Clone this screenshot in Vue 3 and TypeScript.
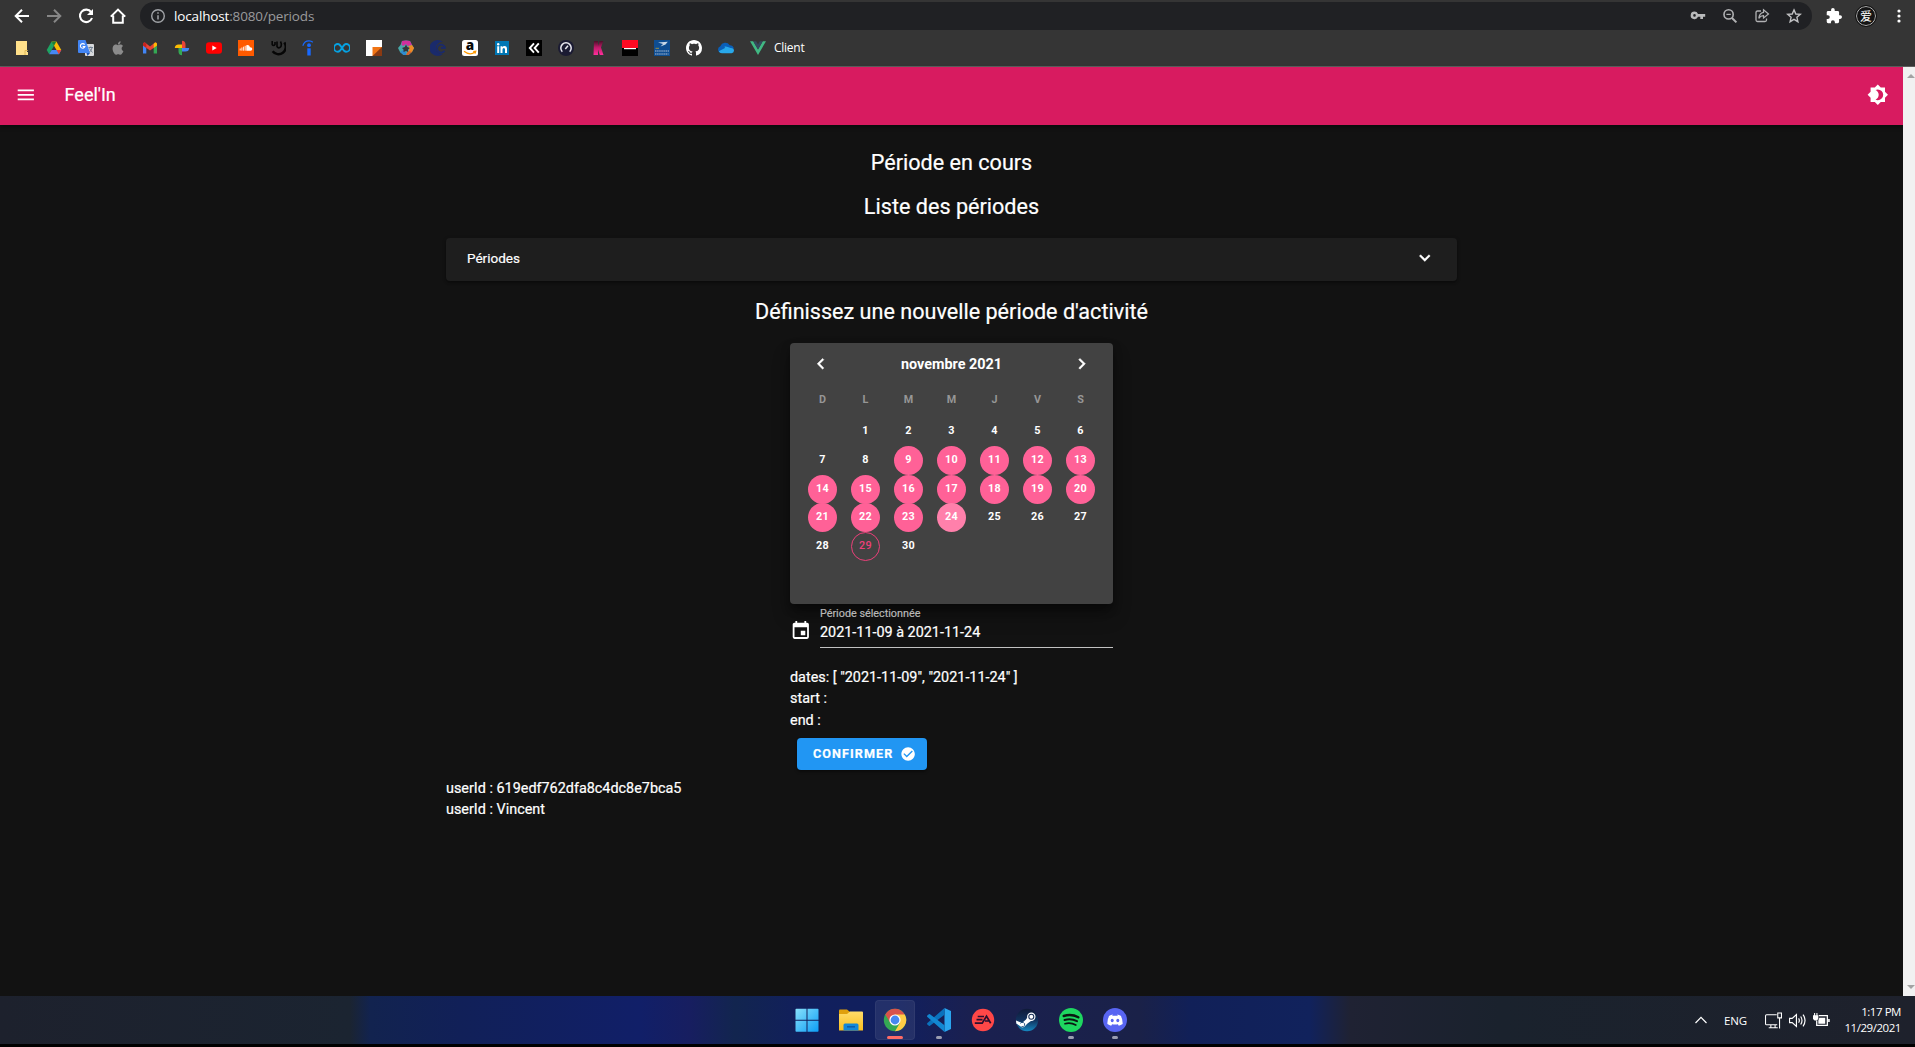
<script setup lang="ts">
interface Day { n: number | null; sel?: boolean; end?: boolean; today?: boolean }

const weekdays = ['D', 'L', 'M', 'M', 'J', 'V', 'S']
const days: Day[] = [{ n: null }]
for (let n = 1; n <= 30; n++) {
  days.push({ n, sel: n >= 9 && n <= 24, end: n === 24, today: n === 29 })
}
const dates = ['2021-11-09', '2021-11-24']
const range = dates.join(' à ')
const datesText = '[ ' + dates.map(d => `"${d}"`).join(', ') + ' ]'
</script>

<template>
  <div class="screen">
    <header class="chrome">
      <div class="toolbar">
        <nav class="nav">
          <svg class="i16" viewBox="0 0 16 16"><path d="M15 8H2M8 1.7L1.7 8L8 14.3" fill="none" stroke="#fff" stroke-width="2" /></svg>
          <svg class="i16" viewBox="0 0 16 16"><path d="M1 8H14M8 1.7L14.3 8L8 14.3" fill="none" stroke="#878787" stroke-width="2" /></svg>
          <svg class="i16" viewBox="0 0 16 16"><path d="M13.2 4.2A6.2 6.2 0 1 0 14 10" fill="none" stroke="#fff" stroke-width="2.1" /><path d="M15 1V7H9Z" fill="#fff" /></svg>
          <svg class="i16" viewBox="0 0 16 16"><path d="M.8 8.6L8 1.6L15.2 8.6M3.2 7.5V14.7H12.8V7.5" fill="none" stroke="#fff" stroke-width="2" /></svg>
        </nav>
        <div class="omnibox">
          <svg class="i16" viewBox="0 0 16 16"><circle cx="8" cy="8" r="6.3" fill="none" stroke="#a0a3a7" stroke-width="1.4" /><path d="M8 7.2V11.6M8 4.2V5.8" stroke="#a0a3a7" stroke-width="1.5" /></svg>
          <span class="url"><b>localhost</b>:8080/periods</span>
          <svg class="i16 push" viewBox="0 0 16 16"><path d="M4.5 3.6a3.8 3.8 0 1 0 3.5 5.2H10.3V11H13V8.8H15.2V6H8A3.8 3.8 0 0 0 4.5 3.6M4.5 6.1a1.3 1.3 0 1 1 0 2.6a1.3 1.3 0 0 1 0-2.6" fill="#b9babb" fill-rule="evenodd" /></svg>
          <svg class="i16" viewBox="0 0 16 16"><circle cx="6.6" cy="6.4" r="4.6" fill="none" stroke="#b0b1b3" stroke-width="1.6" /><path d="M10 10L14.4 14.4" stroke="#b0b1b3" stroke-width="2" /><path d="M4.4 6.4H8.8" stroke="#b0b1b3" stroke-width="1.2" /></svg>
          <svg class="i16" viewBox="0 0 16 16"><path d="M7 3H3.5Q2 3 2 4.500V12Q2 13.500 3.500 13.500H11Q12.500 13.500 12.500 12V10.500" fill="none" stroke="#b0b1b3" stroke-width="1.3" /><path d="M9.500 1.800L14.500 6L9.500 10V7.700Q6.500 7.700 4.800 10.400Q5.300 5 9.500 4.400Z" fill="none" stroke="#b0b1b3" stroke-width="1.200" /></svg>
          <svg class="i16" viewBox="0 0 16 16"><path d="M8 1.900L9.800 6L14.300 6.400L10.900 9.300L11.900 13.700L8 11.400L4.100 13.700L5.100 9.300L1.700 6.400L6.200 6Z" fill="none" stroke="#c0c1c3" stroke-width="1.400" /></svg>
        </div>
        <div class="actions">
          <svg class="i16" viewBox="1 1 22 22"><path fill="#fff" d="M20.500 11H19V7a2 2 0 0 0-2-2h-4V3.500a2.500 2.500 0 0 0-5 0V5H4a2 2 0 0 0-2 2v3.800h1.500a2.700 2.700 0 0 1 0 5.400H2V20a2 2 0 0 0 2 2h3.800v-1.500a2.700 2.700 0 0 1 5.400 0V22H17a2 2 0 0 0 2-2v-4h1.500a2.500 2.500 0 0 0 0-5" /></svg>
          <span class="avatar">爱</span>
          <svg class="dots" viewBox="0 0 4 16"><circle cx="2" cy="3" r="1.600" fill="#fff" /><circle cx="2" cy="8" r="1.600" fill="#fff" /><circle cx="2" cy="13" r="1.600" fill="#fff" /></svg>
        </div>
      </div>
      <div class="bookmarks">
        <svg class="i16" viewBox="0 0 16 16"><path d="M2 1H13V12L14 12V15H2Z" fill="#ffe08a" /><path d="M11 15V10.500H14" fill="none" stroke="#d8b04a" stroke-width=".8" /></svg>
        <svg class="i16" viewBox="0 0 16 16"><path d="M5.600 1.500H10.400L15.300 10H10.500Z" fill="#fbbc04" /><path d="M5.600 1.500L8 5.700L3.200 14.200L.7 10Z" fill="#1ea362" /><path d="M5.600 10H15.300L12.900 14.200H3.200Z" fill="#4688f4" /><path d="M10.400 1.500H5.600L8 5.700Z" fill="#188038" /><path d="M10.500 10H15.300L12.900 14.200Z" fill="#ea4335" /></svg>
        <svg class="i16" viewBox="0 0 16 16"><rect x="7" y="4" width="9" height="12" rx="1" fill="#d8dadd" /><path d="M0 1Q0 0 1 0H7.500L12 13H1Q0 13 0 12Z" fill="#4285f4" /><path d="M8.500 13L12 13L9.500 16Z" fill="#1a50b0" /><path d="M6.600 4.600A2.300 2.300 0 1 0 6.900 6.600H4.700" fill="none" stroke="#fff" stroke-width="1.100" /><path d="M10.500 7.500H15M12.800 6.500V7.500M14 8Q13 11 11.500 12M11.500 8.500Q13 11 14.500 12.500" fill="none" stroke="#6a7a8c" stroke-width=".9" /></svg>
        <svg class="i16" viewBox="0 0 24 24"><path fill="#8b8b8b" d="M18.700 19.500c-.8 1.200-1.700 2.500-3.100 2.500s-1.800-.8-3.300-.8c-1.500 0-2 .8-3.300.8s-2.300-1.300-3.100-2.500C4.200 17 2.900 12.500 4.700 9.400c.9-1.500 2.400-2.500 4.100-2.500 1.300 0 2.500.9 3.300.9s2.300-1.100 3.800-.9c.7 0 2.500.3 3.600 2-.1.100-2.200 1.200-2.100 3.800 0 3 2.600 4 2.700 4-.1.100-.5 1.400-1.400 2.800M13 3.500c.7-.8 1.900-1.500 2.900-1.500.2 1.200-.3 2.400-1 3.200-.7.800-1.800 1.500-2.900 1.400-.2-1.100.4-2.300 1-3.100" /></svg>
        <svg class="i16" viewBox="0 0 16 16"><path d="M1 4V13.500H4.300V6.500Z" fill="#4285f4" /><path d="M15 4V13.500H11.700V6.500Z" fill="#34a853" /><path d="M1 4.200Q1 2.200 3 2.600L8 6.500L13 2.600Q15 2.200 15 4.200L15 5.500L8 10.600L1 5.500Z" fill="#ea4335" /><path d="M11.700 4L13 2.600Q15 2.200 15 4.200V5.500L11.700 8Z" fill="#fbbc04" /><path d="M1 4.200Q1 2.200 3 2.600L4.300 4V8L1 5.500Z" fill="#c5221f" /></svg>
        <svg class="i16" viewBox="0 0 16 16"><path d="M8 8V.8A3.700 3.700 0 0 1 11.500 4.500V8Z" fill="#ea4335" /><path d="M8 8H15.200A3.700 3.700 0 0 1 11.500 11.500H8Z" fill="#4285f4" /><path d="M8 8V15.200A3.700 3.700 0 0 1 4.500 11.500V8Z" fill="#34a853" /><path d="M8 8H.8A3.700 3.700 0 0 1 4.500 4.500H8Z" fill="#fbbc04" /></svg>
        <svg class="i16" viewBox="0 0 16 16"><rect x="0" y="2.300" width="16" height="11.400" rx="3" fill="#f00" /><path d="M6.300 5.500V10.500L10.700 8Z" fill="#fff" /></svg>
        <svg class="i16" viewBox="0 0 16 16"><rect width="16" height="16" fill="#ff5a00" /><path d="M2.200 8.500V10.500M3.900 7.500V10.700M5.600 6.700V10.700M7.200 5.800V10.700" stroke="#fff" stroke-width=".9" /><path d="M8.300 5.300Q11.300 4.500 12 7.300Q14.300 7.200 14.300 9Q14.200 10.700 12.600 10.700H8.300Z" fill="#fff" /></svg>
        <svg class="i16" viewBox="0 0 16 16"><path d="M14.300 2.500A6.800 6.800 0 0 1 2.600 11.300" fill="none" stroke="#060606" stroke-width="2.400" /><path d="M2.200 1V4.500Q3.500 6.500 5 4.500V2M7 1.500V6.500Q8.500 9.300 11 6.500Q12 4 10.500 1.500" fill="none" stroke="#060606" stroke-width="1.600" /></svg>
        <svg class="i16" viewBox="0 0 16 16"><path d="M.8 5.800Q2.500 .8 7 .9Q9.500 1 10.800 2.200" fill="none" stroke="#1769ff" stroke-width="1.200" /><circle cx="7" cy="5.200" r="1.900" fill="#1769ff" /><path d="M5.300 8.300H8.700V15.500H5.300Z" fill="#1769ff" /></svg>
        <svg class="i16" viewBox="0 0 16 16"><path d="M8 8C6.500 5.500 5.500 4 3.900 4a3.900 3.900 0 0 0 0 7.800C5.500 11.800 6.500 10.500 8 8S10.500 4 12.100 4a3.900 3.900 0 0 1 0 7.800C10.500 11.800 9.500 10.500 8 8" fill="none" stroke="#06a2e2" stroke-width="1.900" /></svg>
        <svg class="i16" viewBox="0 0 16 16"><rect width="16" height="16" fill="#fff" /><path d="M6.500 7H16V16H6.500Z" fill="#f07414" /><path d="M16 7V16H6.500Z" fill="#8b3a12" /></svg>
        <svg class="i16" viewBox="0 0 16 16"><path d="M4 1L8 .5L12 1L14 5L16 8L14 12L10.500 15H5.500L2 12L0 8L2.500 5Z" fill="#47a8a8" /><path d="M4 1L8 .5L12 1L14 5L9.500 6L8 4L5.500 6L3.500 5Z" fill="#d02f9c" /><path d="M14 5L16 8L14 12L11 12.500V8.500L10.500 6Z" fill="#f08a24" /><path d="M10 11L14 12L10.500 15H8Z" fill="#d9602a" /><path d="M2 12L5 10L8 12V15H5.500Z" fill="#2e8bd0" /><path d="M8 4.500L9.300 7L12 8L10 9.500V12L8 11L5.500 12V9.500L4 8L6.700 7Z" fill="#33353b" /></svg>
        <svg class="i16" viewBox="0 0 16 16"><path d="M13 2.200A8 8 0 1 0 13 13.800A5.900 5.900 0 1 1 13 2.200" fill="#1a2a6c" /><path d="M14.500 10.700A4 4 0 1 1 15 7.800H11" fill="none" stroke="#1a2a6c" stroke-width="1.800" /></svg>
        <svg class="i16 spill" viewBox="0 0 16 16"><rect width="16" height="16" rx="2.500" fill="#fff" /><text x="7.900" y="10" text-anchor="middle" font-family="Open Sans, sans-serif" font-size="13.500" font-weight="800" fill="#0a0a0a">a</text><path d="M2 11.300Q8 16 13 12.100M11.200 11.600L13.700 11.300L13 13.600" fill="none" stroke="#ff9900" stroke-width="1.300" /></svg>
        <svg class="i16" viewBox="0 0 16 16"><rect x="1" y="1" width="14" height="14" fill="#0077b5" /><path d="M3.200 6.300H5.200V13H3.200ZM6.500 6.300H8.400V7.200Q9 6.100 10.500 6.100Q13 6.100 13 9.200V13H11V9.600Q11 7.900 9.900 7.900Q8.500 7.900 8.500 9.700V13H6.500Z" fill="#fff" /><circle cx="4.200" cy="4.200" r="1.200" fill="#fff" /></svg>
        <svg class="i16" viewBox="0 0 16 16"><rect width="16" height="16" fill="#000" /><path d="M8 3.300L3.800 8L8 12.700M12.800 3.300L8.600 8L12.800 12.700" fill="none" stroke="#fff" stroke-width="1.900" /></svg>
        <svg class="i16" viewBox="0 0 16 16"><circle cx="8" cy="8" r="8" fill="#1b1b33" /><path d="M4.300 11.700A5.200 5.200 0 1 1 11.700 11.700M7.300 9L10 5.800" fill="none" stroke="#e8e8f0" stroke-width="1.500" /></svg>
        <svg class="i16" viewBox="0 0 16 16"><defs><linearGradient id="kg" x2="0" y2="1"><stop stop-color="#4a1028" /><stop offset=".45" stop-color="#c01a6a" /><stop offset="1" stop-color="#ff2f9c" /></linearGradient></defs><path d="M4 1H8V6L9.500 1H13.300L11 7.500L13.500 15H9.800L8 9.500V15H3.500Z" fill="url(#kg)" /></svg>
        <svg class="i16" viewBox="0 0 16 16"><rect width="16" height="8" fill="#ff0a22" /><rect y="8" width="16" height="8" fill="#000" /><rect x="2" y="8" width="12" height="1.200" fill="#fff" /></svg>
        <svg class="i16" viewBox="0 0 16 16"><rect width="16" height="16" fill="#0e4d92" /><path d="M4 2.500L13.800 1.800L11.500 4.500L6.500 6.500L9 4Z" fill="#c9d8e8" /><path d="M1.500 8.300H5" stroke="#b9a03a" stroke-width=".8" /><path d="M1 11H15M1 14H14.500" stroke="#5f86b4" stroke-width="1.800" stroke-dasharray="1.500 .6" /></svg>
        <svg class="i16" viewBox="0 0 16 16"><path fill="#fff" d="M8 0C3.580 0 0 3.580 0 8c0 3.540 2.290 6.530 5.470 7.590.4.070.55-.17.55-.38 0-.19-.01-.82-.01-1.490-2.010.37-2.530-.49-2.690-.94-.09-.23-.48-.94-.82-1.130-.28-.15-.68-.52-.01-.53.63-.01 1.080.58 1.230.82.72 1.210 1.870.87 2.330.66.07-.52.28-.87.51-1.070-1.780-.2-3.640-.89-3.640-3.950 0-.87.31-1.590.82-2.150-.08-.2-.36-1.020.08-2.120 0 0 .67-.21 2.200.82.64-.18 1.320-.27 2-.27s1.360.09 2 .27c1.530-1.040 2.200-.82 2.200-.82.44 1.100.16 1.920.08 2.120.51.56.82 1.270.82 2.150 0 3.070-1.870 3.750-3.650 3.950.29.25.54.73.54 1.480 0 1.070-.01 1.930-.01 2.200 0 .21.15.46.55.38A8.010 8.010 0 0 0 16 8c0-4.420-3.580-8-8-8" /></svg>
        <svg class="i16" viewBox="0 0 16 16"><path d="M3.500 12.800A3.400 3.400 0 0 1 2.300 6.200A5.300 5.300 0 0 1 11.700 5.200Q15.500 5.500 15.800 8.500L9 12.500Z" fill="#0a5fb8" /><path d="M6.500 6.500Q9 6 12.600 8Q16 8 16 10.700Q15.800 13 13.500 13.200H4Q1.500 13 .8 11.200L7 8Z" fill="#28a8ea" /></svg>
        <svg class="i16" viewBox="0 0 16 16"><path d="M0 1.200H3.200L8 9.400L12.800 1.200H16L8 15Z" fill="#41b883" /><path d="M3.200 1.200H6.100L8 4.500L9.900 1.200H12.800L8 9.400Z" fill="#35495e" /></svg>
        <span class="bm-text">Client</span>
      </div>
    </header>

    <div class="viewport">
      <div class="app">
        <div class="appbar">
          <svg class="mdi" viewBox="0 0 24 24"><path fill="#fff" d="M3,6H21V8H3V6M3,11H21V13H3V11M3,16H21V18H3V16Z" /></svg>
          <span class="brand">Feel'In</span>
          <svg class="mdi push" viewBox="0 0 24 24"><path fill="#fff" d="M12,18C11.11,18 10.26,17.8 9.5,17.45C11.56,16.5 13,14.42 13,12C13,9.58 11.56,7.5 9.5,6.55C10.26,6.2 11.11,6 12,6A6,6 0 0,1 18,12A6,6 0 0,1 12,18M20,15.31L23.31,12L20,8.69V4H15.31L12,0.69L8.69,4H4V8.69L0.69,12L4,15.31V20H8.69L12,23.31L15.31,20H20V15.31Z" /></svg>
        </div>

        <main class="container">
          <h2>Période en cours</h2>
          <h2 class="second">Liste des périodes</h2>
          <div class="panel">
            <span>Périodes</span>
            <svg class="mdi" viewBox="0 0 24 24"><path fill="#fff" stroke="#fff" stroke-width=".5" d="M7.41,8.58L12,13.17L16.59,8.58L18,10L12,16L6,10L7.41,8.58Z" /></svg>
          </div>
          <h2 class="third">Définissez une nouvelle période d'activité</h2>

          <section class="form">
            <div class="picker">
              <div class="picker-head">
                <svg class="mdi" viewBox="0 0 24 24"><path fill="#fff" stroke="#fff" stroke-width=".5" d="M15.41,16.58L10.83,12L15.41,7.41L14,6L8,12L14,18L15.41,16.58Z" /></svg>
                <span>novembre 2021</span>
                <svg class="mdi" viewBox="0 0 24 24"><path fill="#fff" stroke="#fff" stroke-width=".5" d="M8.59,16.58L13.17,12L8.59,7.41L10,6L16,12L10,18L8.59,16.58Z" /></svg>
              </div>
              <div class="grid week"><span v-for="(w, i) in weekdays" :key="i">{{ w }}</span></div>
              <div class="grid days">
                <span v-for="(d, i) in days" :key="i" class="day" :class="{ sel: d.sel, end: d.end, today: d.today }"><i>{{ d.n }}</i></span>
              </div>
            </div>
            <div class="field">
              <svg class="mdi" viewBox="0 0 24 24"><path fill="#fff" d="M19,19H5V8H19M16,1V3H8V1H6V3H5C3.89,3 3,3.89 3,5V19A2,2 0 0,0 5,21H19A2,2 0 0,0 21,19V5C21,3.89 20.1,3 19,3H18V1M17,12H12V17H17V12Z" /></svg>
              <div class="slot">
                <label>Période sélectionnée</label>
                <div class="value">{{ range }}</div>
              </div>
            </div>
            <p class="dates">dates: {{ datesText }}</p>
            <p>start :</p>
            <p>end :</p>
            <button class="confirm">
              <span>CONFIRMER</span>
              <svg viewBox="0 0 24 24"><path fill="#fff" d="M12 2C6.500 2 2 6.500 2 12S6.500 22 12 22 22 17.500 22 12 17.500 2 12 2M10 17L5 12L6.410 10.590L10 14.170L17.590 6.580L19 8L10 17Z" /></svg>
            </button>
          </section>
          <p>userId : 619edf762dfa8c4dc8e7bca5</p>
          <p>userId : Vincent</p>
        </main>
      </div>
      <div class="scrollbar"><i class="up"></i><i class="down"></i></div>
    </div>

    <footer class="taskbar">
      <div class="side"></div>
      <div class="apps">
        <span class="task"><svg viewBox="0 0 24 24"><defs><linearGradient id="wg" gradientUnits="userSpaceOnUse" x1="0" y1="0" x2="24" y2="24"><stop stop-color="#8be2fb" /><stop offset="1" stop-color="#0a9cf5" /></linearGradient></defs><path fill="url(#wg)" d="M.500 1.500Q.500 .7 1.300 .7H11.500V11.700H.500ZM12.500 .7H22.700Q23.500 .7 23.500 1.500V11.700H12.500ZM.500 12.700H11.500V23.700H1.300Q.500 23.700 .500 22.900ZM12.500 12.700H23.500V22.900Q23.500 23.700 22.700 23.700H12.500Z" /></svg></span>
        <span class="task"><svg viewBox="0 0 24 24"><defs><linearGradient id="fg" x2="0" y2="1"><stop stop-color="#ffdc6a" /><stop offset="1" stop-color="#fbbf1e" /></linearGradient></defs><path d="M0 2.500Q0 1.500 1 1.500H8L11 4V8H0Z" fill="#e0a00c" /><path d="M0 6H8L11 3.500H23Q24 3.500 24 4.500V22.500H0Z" fill="url(#fg)" /><path d="M4.500 22.500V17Q4.500 15.500 6 15.500H18Q19.500 15.500 19.500 17V22.500Z" fill="#1488d8" /><path d="M8 18.800H16" stroke="#0b5cab" stroke-width="1.500" /></svg></span>
        <span class="task active"><svg viewBox="0 0 24 24"><circle cx="12" cy="12" r="11.200" fill="#34a853" /><path d="M12 12L2.300 6.400A11.200 11.200 0 0 1 21.700 6.400Z" fill="#d9534a" /><path d="M12 6.400H21.700A11.200 11.200 0 0 1 12 23.200L17 14.800Z" fill="#ffcd46" /><path d="M2.300 6.400L7.200 14.800L12 12V6.400Z" fill="#d9534a" /><circle cx="12" cy="12" r="5.600" fill="#fff" /><circle cx="12" cy="12" r="4.400" fill="#4688f1" /></svg><i class="mark"></i></span>
        <span class="task"><svg viewBox="0 0 24 24"><path d="M17.500 0L24 3V21L17.500 24Z" fill="#2aa5ee" /><path d="M17.500 0V6.700L3 17.800Q2.200 18.300 1.500 17.600L.300 16.500Q-.300 15.800 .400 15Z" fill="#0a72bd" /><path d="M17.500 24V17.300L3 6.200Q2.200 5.700 1.500 6.400L.300 7.500Q-.300 8.200 .400 9Z" fill="#1287d2" /></svg><i class="mark dot"></i></span>
        <span class="task"><svg viewBox="0 0 24 24"><circle cx="12" cy="12" r="11.200" fill="#ff4747" /><path d="M6.700 8.500H13M5.500 11.700H11.500M3.800 15.200H11.200L15.500 8.200L19.700 15.200M14 13H18" fill="none" stroke="#2a1030" stroke-width="1.700" /></svg></span>
        <span class="task"><svg viewBox="0 0 24 24"><defs><linearGradient id="sg" x2="0" y2="1"><stop stop-color="#101a38" /><stop offset=".5" stop-color="#11315c" /><stop offset="1" stop-color="#1687c0" /></linearGradient></defs><circle cx="12" cy="12" r="11.200" fill="url(#sg)" /><path d="M1 12.500L7 15L11 11.500L14 7L18 11.500L12.500 15.500L9.500 18.500A3.200 3.200 0 0 1 5 18L1.300 15.500Z" fill="#fff" /><circle cx="16.300" cy="8.700" r="4.200" fill="#fff" /><circle cx="16.300" cy="8.700" r="2.500" fill="none" stroke="#1b3158" stroke-width="1.100" /><path d="M5.500 15.500A2.200 2.200 0 1 1 6.500 18.500" fill="none" stroke="#1b4a78" stroke-width=".9" /></svg></span>
        <span class="task"><svg viewBox="0 0 24 24"><circle cx="12" cy="12" r="12" fill="#1ed760" /><g fill="none" stroke="#0b1712" stroke-linecap="round"><path d="M4.700 8Q12.500 5.500 19.300 9.300" stroke-width="2.400" /><path d="M5.500 12Q12 10 18 13.200" stroke-width="2" /><path d="M6 15.700Q11.700 14.200 16.800 17" stroke-width="1.700" /></g></svg><i class="mark dot"></i></span>
        <span class="task"><svg viewBox="0 0 24 24"><circle cx="12" cy="12" r="12" fill="#5865f2" /><path d="M9.800 6.500L9.200 7.800H14.800L14.200 6.500Q16 6.700 17.700 7.700Q19.900 11.300 19.600 16Q17.800 17.300 15.800 17.700L14.900 16.200Q12 17 9.100 16.200L8.200 17.700Q6.200 17.300 4.400 16Q4.100 11.300 6.300 7.700Q8 6.700 9.800 6.500Z" fill="#fff" /><ellipse cx="9.200" cy="12.500" rx="1.500" ry="1.700" fill="#5865f2" /><ellipse cx="14.800" cy="12.500" rx="1.500" ry="1.700" fill="#5865f2" /></svg><i class="mark dot"></i></span>
      </div>
      <div class="side tray">
        <svg class="caret" viewBox="0 0 12 8"><path d="M.5 7L6 1.300L11.500 7" fill="none" stroke="#fff" stroke-width="1.200" /></svg>
        <span class="lang">ENG</span>
        <svg class="t" viewBox="0 0 16 16"><path d="M11 2.500H1.500Q.500 2.500 .500 3.500V11Q.500 12 1.500 12H11.500M5.500 12V14.500M9.500 12V14.500M3.500 14.800H12M12 1H15.500V5.500H12ZM13.700 5.500V15.500" fill="none" stroke="#fff" /></svg>
        <svg class="t" viewBox="0 0 16 16"><path d="M.5 6H3L7 2.500V13.500L3 10H.500ZM9 6Q10.500 8 9 10M11 4.200Q13.500 8 11 11.800M13.200 2.500Q17 8 13.200 13.500" fill="none" stroke="#fff" stroke-width="1.100" /></svg>
        <svg class="t" viewBox="0 0 16 16"><path d="M5.500 3.500H13.500V12.500H3.500V8" fill="none" stroke="#fff" stroke-width="1.200" /><path d="M0 3H5V6.500L3.500 8H1.500L0 6.500ZM1 1H2V3H1ZM3.200 1H4.200V3H3.200ZM6 5.500H11.500V11H5V8Z" fill="#fff" /><path d="M15 6.500V9.500" stroke="#fff" stroke-width="1.500" /></svg>
        <div class="clock"><span>1:17 PM</span><span>11/29/2021</span></div>
      </div>
    </footer>
  </div>
</template>

<style>
body { background: #000; overflow: hidden; }
</style>

<style scoped>
.screen { width: 1915px; height: 1047px; display: flex; flex-direction: column; background: #000; overflow: hidden; box-sizing: border-box; font-family: Roboto, sans-serif; color: #fff; }
svg { display: block; flex: none; }
.i16 { width: 16px; height: 16px; }
.spill { overflow: visible; }
.push { margin-left: auto; }

.chrome { height: 67px; flex: none; box-sizing: border-box; background: #353535; border-bottom: 1px solid #5f5f5f; font-family: "Open Sans", "Noto Sans", sans-serif; }
.toolbar { height: 32px; display: flex; align-items: center; padding-left: 14px; }
.nav { display: flex; gap: 16px; width: 126px; }
.omnibox { width: 1672px; height: 28px; box-sizing: border-box; border-radius: 14px; background: #202124; display: flex; align-items: center; gap: 16px; padding: 0 10px; }
.url { margin-left: -8px; font-size: 13.500px; letter-spacing: -0.150px; color: #9a9a9c; }
.url b { font-weight: 400; color: #fff; }
.actions { display: flex; align-items: center; margin-left: 14px; }
.avatar { width: 18px; height: 18px; margin-left: 14px; border: 1px solid #b5b5b5; outline: 1px solid #111; border-radius: 50%; background: #151515; font: 12px/17px "Noto Sans CJK SC", sans-serif; text-align: center; }
.dots { width: 4px; height: 16px; margin-left: 21px; }
.bookmarks { height: 32px; display: flex; align-items: center; gap: 16px; padding-left: 14px; }
.bm-text { font-size: 12px; margin: -2px 0 0 -8px; letter-spacing: -0.250px; }

.viewport { height: 929px; flex: none; display: flex; }
.app { width: 1903px; background: #121212; -webkit-text-stroke: .2px currentColor; }
.scrollbar { flex: 1; background: #f1f1f1; display: flex; flex-direction: column; justify-content: space-between; align-items: center; padding: 7px 0 7px 4px; }
.scrollbar i { width: 0; height: 0; border: 4px solid transparent; }
.up { border-bottom-color: #a3a3a3 !important; border-top: 0 !important; }
.down { border-top-color: #a3a3a3 !important; border-bottom: 0 !important; }

.mdi { width: 21.600px; height: 21.600px; }
.appbar { height: 58px; box-sizing: border-box; padding: 0 14px 3px 15px; display: flex; align-items: center; background: #d81b60; box-shadow: 0 2px 4px rgba(0,0,0,.4); }
.brand { margin-left: 28px; font-size: 18px; }

.container { width: 1011px; margin: 0 auto; padding-top: 23px; }
h2 { margin: 0; height: 29px; line-height: 29px; font-size: 21.600px; font-weight: 400; text-align: center; }
.second { margin-top: 15px; }
.third { margin-top: 16px; }
.panel { margin-top: 17px; height: 43px; box-sizing: border-box; padding: 0 21px 4px; display: flex; align-items: center; justify-content: space-between; border-radius: 4px; background: #1e1e1e; font-size: 13.500px; box-shadow: 0 2px 2px rgba(0,0,0,.25), 0 1px 4px rgba(0,0,0,.2); }
.form { width: 323px; margin: 17px auto 0; }
.picker { height: 261px; box-sizing: border-box; border-radius: 4px; background: #424242; padding: 0 11px; box-shadow: 0 5px 8px rgba(0,0,0,.4), 0 12px 18px rgba(0,0,0,.25); -webkit-text-stroke: 0; }
.picker-head { height: 42px; display: flex; align-items: center; justify-content: space-between; padding: 0 9px; font-size: 14.400px; font-weight: 700; }
.grid { display: grid; grid-template-columns: repeat(7, 43px); justify-items: center; }
.week { height: 32px; line-height: 30px; font-size: 10.800px; font-weight: 700; color: #969696; }
.days { grid-auto-rows: 28.800px; }
.day { width: 29px; height: 29px; box-sizing: border-box; border-radius: 50%; font-size: 10.800px; line-height: 28px; font-weight: 700; text-align: center; letter-spacing: .4px; }
.day i { font-style: normal; }
.sel { background: #ff6197; }
.end { background: #ff80ab; }
.today { border: 1px solid #ec407a; color: #ec407a; font-weight: 500; line-height: 26px; }

.field { display: flex; margin-top: 1px; }
.field .mdi { margin: 15px 8.400px 0 0; }
.slot { flex: 1; height: 43px; box-sizing: border-box; border-bottom: 1px solid #c2c2c2; }
.slot label { display: block; font-size: 10.800px; line-height: 17px; color: #b8b8b8; }
.value { font-size: 14.400px; line-height: 22px; }
p { margin: 0; font-size: 14.400px; line-height: 21.600px; }
.dates { margin-top: 18.600px; }
.confirm { display: flex; align-items: center; margin: 6.600px 0 7.900px 7px; width: 130px; height: 32px; padding: 0 11px 0 16px; border: 0; border-radius: 4px; background: #2196f3; color: #fff; font: 700 12.600px Roboto, sans-serif; letter-spacing: 1.080px; justify-content: space-between; box-shadow: 0 2px 3px rgba(0,0,0,.4); }
.confirm svg { width: 16.200px; height: 16.200px; }

.taskbar { height: 48px; flex: none; display: flex; background: linear-gradient(90deg, #1d212d 0, #1b2431 350px, #12234f 370px, #112058 460px, #111f68 640px, #171e60 690px, #12254f 735px, #111f5c 800px, #111f5e 900px, #1a2050 970px, #1a2148 1140px, #112058 1190px, #11225c 1310px, #1f2233 1350px, #1a222d 1500px, #1e212c 1915px); font-family: "Open Sans", "Noto Sans", sans-serif; font-size: 12px; }
.side { width: 785px; display: flex; align-items: center; }
.apps { display: flex; gap: 4px; width: 352px; padding-left: 2px; box-sizing: border-box; }
.task { position: relative; width: 40px; height: 40px; margin-top: 4px; flex: none; box-sizing: border-box; display: flex; align-items: center; justify-content: center; border-radius: 4px; }
.task svg { width: 24px; height: 24px; }
.active { background: rgba(255,255,255,.08); box-shadow: inset 0 0 0 1px rgba(255,255,255,.05); }
.mark { position: absolute; bottom: 1px; left: 12px; width: 16px; height: 3px; border-radius: 2px; background: #ff6b66; }
.dot { left: 17px; width: 6px; background: #9a9db0; }
.tray { width: 778px; box-sizing: border-box; justify-content: flex-end; padding-right: 14px; }
.caret { width: 12px; height: 8px; margin-right: 17px; }
.lang { width: 24px; font-size: 11.500px; letter-spacing: -.2px; margin-right: 17px; }
.t { width: 17px; height: 17px; margin-right: 7px; }
.clock { width: 64px; display: flex; flex-direction: column; align-items: flex-end; line-height: 16px; font-size: 11.500px; letter-spacing: -.45px; white-space: nowrap; }
</style>
